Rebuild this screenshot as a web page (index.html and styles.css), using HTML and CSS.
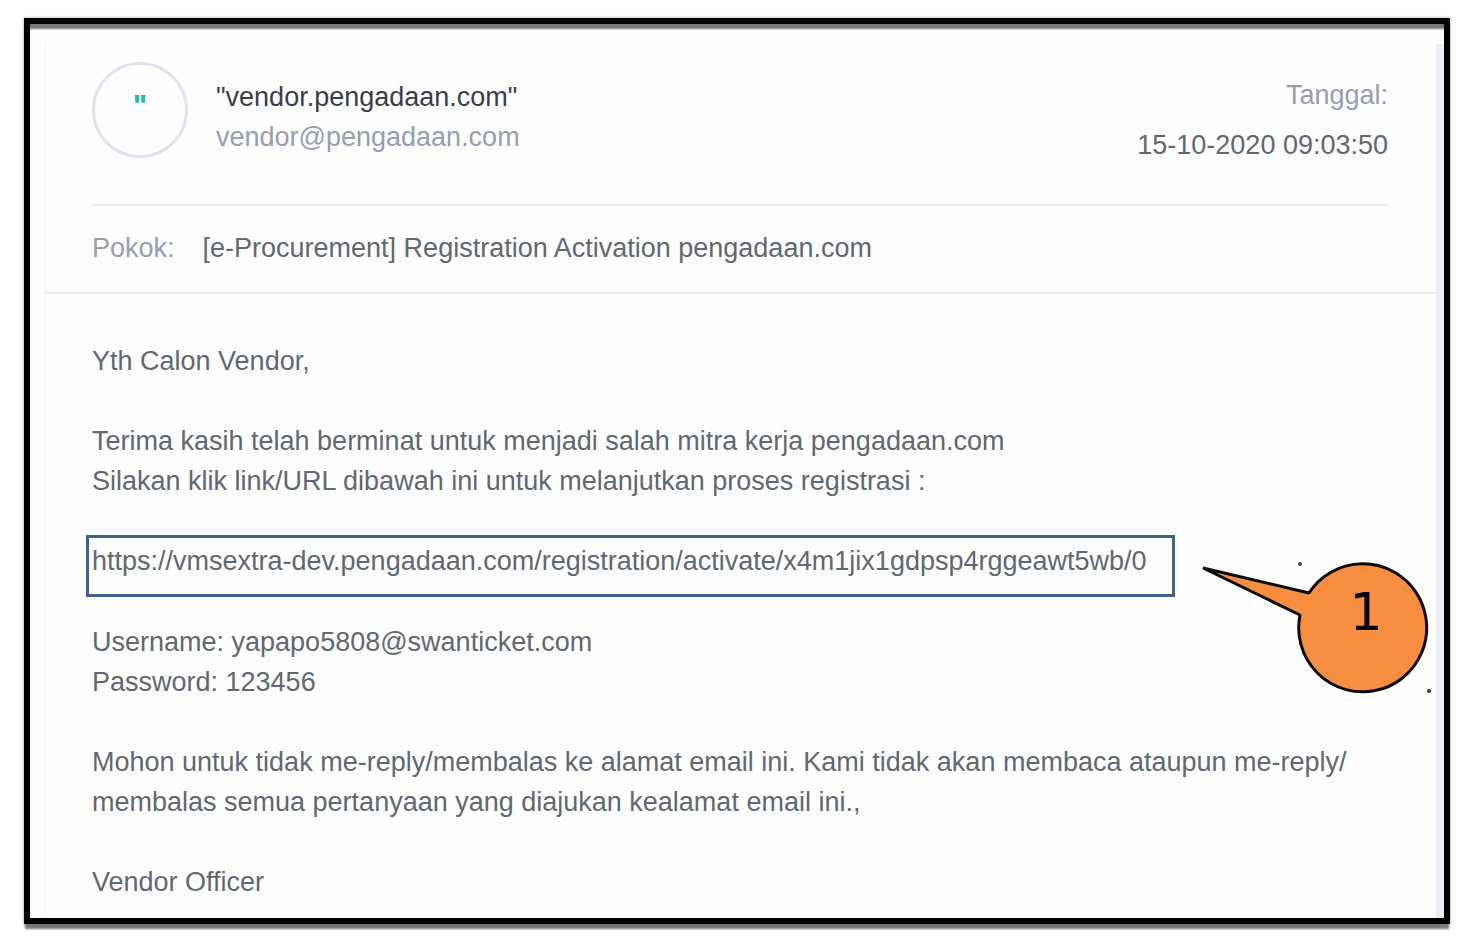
FILE: index.html
```html
<!DOCTYPE html>
<html lang="id">
<head>
  <meta charset="UTF-8">
  <title>Registration Activation</title>
  <link rel="stylesheet" href="styles.css">
</head>
<body>
  <div class="frame">
    <article class="mail">
      <header class="mail-header">
        <div class="avatar">"</div>
        <div class="sender">
          <div class="sender-name">"vendor.pengadaan.com"</div>
          <div class="muted">vendor@pengadaan.com</div>
        </div>
        <div class="date">
          <div class="muted">Tanggal:</div>
          <div>15-10-2020 09:03:50</div>
        </div>
      </header>
      <div class="subject">
        <span class="muted">Pokok:</span>
        <span>[e-Procurement] Registration Activation pengadaan.com</span>
      </div>
      <div class="mail-body">
        <p>Yth Calon Vendor,</p>
        <p>Terima kasih telah berminat untuk menjadi salah mitra kerja pengadaan.com<br>Silakan klik link/URL dibawah ini untuk melanjutkan proses registrasi :</p>
        <div class="activation">
          <a class="activation-link" href="https://vmsextra-dev.pengadaan.com/registration/activate/x4m1jix1gdpsp4rggeawt5wb/0">https://vmsextra-dev.pengadaan.com/registration/activate/x4m1jix1gdpsp4rggeawt5wb/0</a>
          <svg class="callout" width="232" height="140" viewBox="0 0 232 140">
            <path d="M2 8 L108 33 A64 64 0 1 1 99 55 Z" fill="#f78d3f" stroke="#0a0a0a" stroke-width="3" stroke-linejoin="bevel"/>
            <text x="165" y="70" text-anchor="middle">1</text>
            <circle cx="99" cy="4" r="2" fill="#444"/>
            <circle cx="228" cy="131" r="2" fill="#333"/>
          </svg>
        </div>
        <p>Username: yapapo5808@swanticket.com<br>Password: 123456</p>
        <p>Mohon untuk tidak me-reply/membalas ke alamat email ini. Kami tidak akan membaca ataupun me-reply/<wbr>membalas semua pertanyaan yang diajukan kealamat email ini.,</p>
        <p>Vendor Officer</p>
      </div>
    </article>
  </div>
</body>
</html>
```

FILE: styles.css
```css
* { box-sizing: border-box; }
body { margin: 0; padding: 18px 18px 18px 24px; background: #fff; font-family: "Liberation Sans", Arial, sans-serif; font-size: 27px; line-height: 40px; color: #63676f; }
.frame { border: 6px solid #000; padding: 20px 0 0 14px; background: #fefefe; box-shadow: inset 0 6px 2px -1px #777, 0 6px 2px -1px #777, 0 0 3px #aaa; }
.mail { border-left: 2px solid #f5f5fa; border-right: 8px solid #ebedf4; }
.muted { color: #989db0; }

.mail-header { display: flex; margin: 0 48px 0 46px; padding: 18px 0 34px; border-bottom: 2px solid #ebedf4; }
.avatar { width: 96px; height: 96px; border: 3px solid #e2e1ee; border-radius: 50%; text-align: center; line-height: 80px; font-family: Inter, sans-serif; font-size: 24px; font-weight: 900; color: #1bbf9c; }
.sender { margin: 15px 0 0 28px; }
.sender-name { color: #3b3d4a; }
.date { margin: 8px 0 0 auto; text-align: right; line-height: 50px; }
.subject { display: flex; gap: 28px; padding: 22px 48px 24px 46px; border-bottom: 2px solid #ebedf4; }

.mail-body { padding: 47px 48px 16px 46px; }
.mail-body p { margin: 0 0 40px; }
.mail-body p:last-child { margin-bottom: 0; }
.activation { position: relative; width: fit-content; margin: -6px 0 25px -6px; }
.activation-link { display: block; padding: 3px 25px 13px 3px; border: 3px solid #3f628f; color: inherit; text-decoration: none; }
.callout { position: absolute; top: 25px; left: calc(100% + 26px); }
.callout text { font-family: "DejaVu Sans", sans-serif; font-size: 52px; fill: #000; }
```
